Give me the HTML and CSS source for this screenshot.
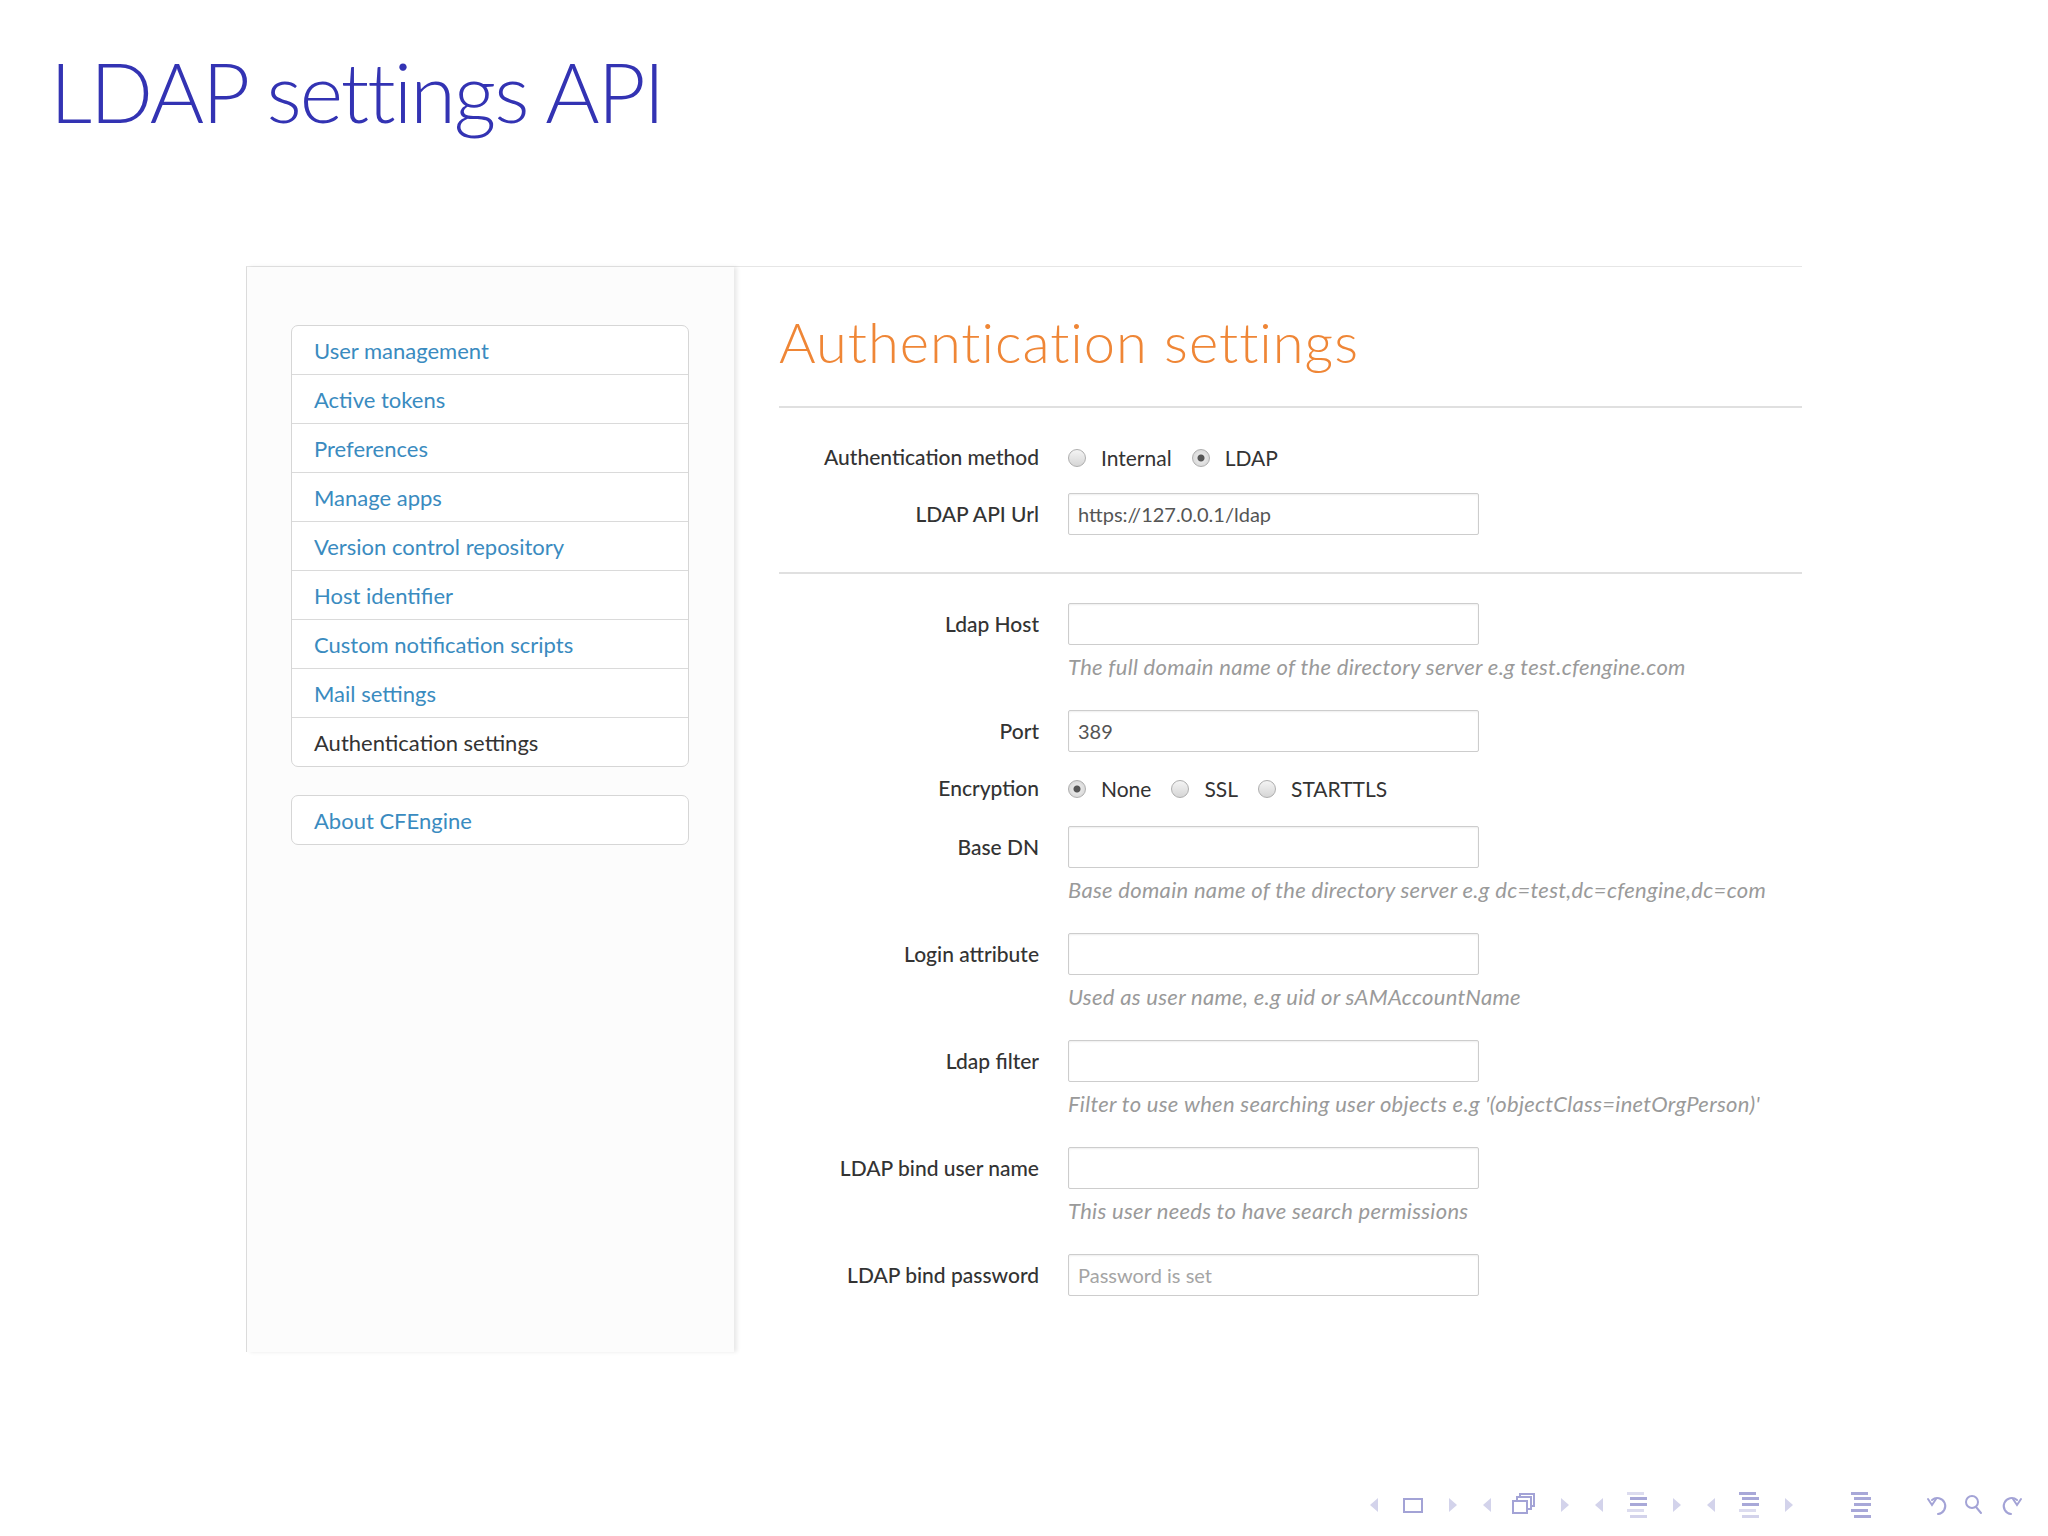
FILE: index.html
```
<!DOCTYPE html>
<html>

<head>
  <meta charset="UTF-8">
  <title>LDAP settings API</title>
  <link rel="stylesheet" href="styles.css">
</head>

<body>
  <div class="slide">
    <h1 class="frametitle">LDAP settings API</h1>

    <div class="shot">
      <aside class="side">
        <ul class="nav">
          <li><a href="#">User management</a></li>
          <li><a href="#">Active tokens</a></li>
          <li><a href="#">Preferences</a></li>
          <li><a href="#">Manage apps</a></li>
          <li><a href="#">Version control repository</a></li>
          <li><a href="#">Host identifier</a></li>
          <li><a href="#">Custom notification scripts</a></li>
          <li><a href="#">Mail settings</a></li>
          <li class="active"><a href="#">Authentication settings</a></li>
        </ul>
        <ul class="nav nav-about">
          <li><a href="#">About CFEngine</a></li>
        </ul>
      </aside>

      <main class="content">
        <h2 class="page-title">Authentication settings</h2>
        <hr class="rule">

        <form class="form">
          <div class="group group-radio group-first">
            <label class="label">Authentication method</label>
            <div class="options">
              <span class="option"><input type="radio" class="radio" name="method">Internal</span>
              <span class="option"><input type="radio" class="radio" name="method" checked>LDAP</span>
            </div>
          </div>
          <div class="group group-tight">
            <label class="label">LDAP API Url</label>
            <div class="field"><input class="input" type="text" value="https://127.0.0.1/ldap"></div>
          </div>

          <hr class="rule rule-thin">

          <div class="group group-after-rule">
            <label class="label">Ldap Host</label>
            <div class="field">
              <input class="input" type="text">
              <p class="help">The full domain name of the directory server e.g test.cfengine.com</p>
            </div>
          </div>
          <div class="group">
            <label class="label">Port</label>
            <div class="field"><input class="input" type="text" value="389"></div>
          </div>
          <div class="group group-radio group-tight">
            <label class="label">Encryption</label>
            <div class="options">
              <span class="option"><input type="radio" class="radio" name="enc" checked>None</span>
              <span class="option"><input type="radio" class="radio" name="enc">SSL</span>
              <span class="option"><input type="radio" class="radio" name="enc">STARTTLS</span>
            </div>
          </div>
          <div class="group group-after-radio">
            <label class="label">Base DN</label>
            <div class="field">
              <input class="input" type="text">
              <p class="help">Base domain name of the directory server e.g dc=test,dc=cfengine,dc=com</p>
            </div>
          </div>
          <div class="group">
            <label class="label">Login attribute</label>
            <div class="field">
              <input class="input" type="text">
              <p class="help">Used as user name, e.g uid or sAMAccountName</p>
            </div>
          </div>
          <div class="group">
            <label class="label">Ldap filter</label>
            <div class="field">
              <input class="input" type="text">
              <p class="help">Filter to use when searching user objects e.g '(objectClass=inetOrgPerson)'</p>
            </div>
          </div>
          <div class="group">
            <label class="label">LDAP bind user name</label>
            <div class="field">
              <input class="input" type="text">
              <p class="help">This user needs to have search permissions</p>
            </div>
          </div>
          <div class="group">
            <label class="label">LDAP bind password</label>
            <div class="field"><input class="input" type="password" placeholder="Password is set"></div>
          </div>
        </form>
      </main>
    </div>

    <footer class="navbar">
      <svg width="670" height="30" viewBox="0 0 670 30">
        <g fill="#d3d3eb">
          <polygon points="18,8 18,22 10,15" />
          <polygon points="89,8 89,22 97,15" />
          <polygon points="131,8 131,22 123,15" />
          <polygon points="201,8 201,22 209,15" />
          <polygon points="243,8 243,22 235,15" />
          <polygon points="313,8 313,22 321,15" />
          <polygon points="355,8 355,22 347,15" />
          <polygon points="425,8 425,22 433,15" />
        </g>
        <g fill="none" stroke="#a3a3d6" stroke-width="2">
          <rect x="44" y="9" width="18" height="13" />
          <rect x="160" y="4" width="14" height="12" fill="#fff" />
          <rect x="157" y="7" width="14" height="12" fill="#fff" />
          <rect x="153" y="11" width="14" height="12" fill="#fff" />
        </g>
        <g>
          <rect x="267" y="2" width="17" height="3" fill="#dcdcef" />
          <rect x="270" y="7" width="17" height="3" fill="#a8a8d8" />
          <rect x="270" y="13" width="17" height="3" fill="#a8a8d8" />
          <rect x="267" y="19" width="17" height="3" fill="#dcdcef" />
          <rect x="270" y="25" width="17" height="3" fill="#d3d3eb" />

          <rect x="379" y="2" width="17" height="3" fill="#a8a8d8" />
          <rect x="382" y="7" width="17" height="3" fill="#a8a8d8" />
          <rect x="382" y="13" width="17" height="3" fill="#a8a8d8" />
          <rect x="379" y="19" width="17" height="3" fill="#dcdcef" />
          <rect x="382" y="25" width="17" height="3" fill="#d3d3eb" />

          <rect x="491" y="2" width="17" height="3" fill="#a8a8d8" />
          <rect x="494" y="7" width="17" height="3" fill="#a8a8d8" />
          <rect x="494" y="13" width="17" height="3" fill="#a8a8d8" />
          <rect x="491" y="19" width="17" height="3" fill="#a8a8d8" />
          <rect x="494" y="25" width="17" height="3" fill="#a8a8d8" />
        </g>
        <g fill="none" stroke="#a3a3d6" stroke-width="2" stroke-linecap="round">
          <path d="M572 10 A8 8 0 1 1 578 24" />
          <path d="M568 9 L572 15 L576 9" />
          <circle cx="612" cy="12" r="6" />
          <path d="M616 17 L621 23" />
          <path d="M657 10 A8 8 0 1 0 651 24" />
          <path d="M653 9 L657 15 L661 9" />
        </g>
      </svg>
    </footer>
  </div>
</body>

</html>
```

FILE: styles.css
```
body {
  margin: 0;
  background: #fff;
}

.slide {
  display: flex;
  flex-direction: column;
  width: 2048px;
  height: 1536px;
  padding-top: 41px;
  box-sizing: border-box;
}

.frametitle {
  margin: 0;
  padding-left: 50px;
  height: 100px;
  font-family: Lato, "Open Sans", sans-serif;
  font-size: 83px;
  font-weight: 300;
  line-height: 100px;
  letter-spacing: -2px;
  color: #3333b3;
}

/* screenshot of the mission portal */
.shot {
  display: flex;
  width: 1556px;
  height: 1086px;
  margin: 125px 0 0 246px;
  border-top: 1px solid #e6e6e6;
  border-left: 1px solid #dcdcdc;
  box-sizing: border-box;
  background: #fff;
  font-family: Lato, "Open Sans", sans-serif;
}

.side {
  flex: none;
  width: 487px;
  padding: 58px 45px 0 44px;
  box-sizing: border-box;
  background: #fcfcfc;
  box-shadow: 3px 0 4px rgba(0, 0, 0, 0.09);
  position: relative;
}

.nav {
  list-style: none;
  margin: 0;
  padding: 0;
  background: #fff;
  border: 1px solid #d6d6d6;
  border-radius: 7px;
}

.nav li {
  height: 48px;
  border-top: 1px solid #dadada;
  display: flex;
  align-items: center;
  padding-left: 22px;
}

.nav li:first-child {
  border-top: 0;
}

.nav a {
  font-size: 22px;
  color: #3a8bc0;
  text-decoration: none;
}

.nav .active a {
  color: #333;
}

.nav-about {
  margin-top: 28px;
}

.content {
  flex: 1;
  padding-left: 45px;
}

.page-title {
  margin: 41px 0 0;
  font-size: 56px;
  font-weight: 300;
  line-height: 67px;
  letter-spacing: 1px;
  color: #ef8636;
}

.rule {
  margin: 31px 0 0;
  height: 0;
  border: 0;
  border-top: 2px solid #e0e0e0;
}

.rule-thin {
  margin-top: 37px;
}

.group {
  display: flex;
  align-items: flex-start;
  margin-top: 31px;
}

.group-first {
  margin-top: 33px;
}

.group-tight {
  margin-top: 20px;
}

.group-after-rule {
  margin-top: 29px;
}

.group-after-radio {
  margin-top: 22px;
}

.label {
  flex: none;
  width: 260px;
  margin-right: 29px;
  text-align: right;
  font-size: 21px;
  font-weight: 500;
  line-height: 42px;
  color: #333;
}

.group-radio .label {
  line-height: 32px;
}

.input {
  display: block;
  width: 411px;
  height: 42px;
  margin: 0;
  padding: 0 9px;
  box-sizing: border-box;
  border: 1px solid #cdcdcd;
  border-radius: 2px;
  box-shadow: inset 0 1px 2px rgba(0, 0, 0, 0.07);
  font-family: Lato, "Open Sans", sans-serif;
  font-size: 20px;
  color: #555;
  background: #fff;
}

.input::placeholder {
  color: #a5a5a5;
}

.help {
  margin: 10px 0 0;
  font-size: 22px;
  font-style: italic;
  line-height: 24px;
  letter-spacing: 0.3px;
  color: #9a9a9a;
  white-space: nowrap;
}

.options {
  display: flex;
  align-items: center;
  height: 32px;
  gap: 20px;
}

.option {
  display: flex;
  align-items: center;
  font-size: 21px;
  color: #333;
}

.radio {
  appearance: none;
  -webkit-appearance: none;
  width: 18px;
  height: 18px;
  margin: 2px 15px 0 0;
  border: 1px solid #aeaeae;
  border-radius: 50%;
  background: linear-gradient(#f4f4f4, #d6d6d6);
  box-sizing: border-box;
}

.radio:checked {
  background: radial-gradient(circle, #555 0, #555 3px, #e6e6e6 4px, #d0d0d0 100%);
}

.navbar {
  margin-top: auto;
  margin-bottom: 16px;
  height: 30px;
  display: flex;
  justify-content: flex-end;
  padding-right: 18px;
}
```
